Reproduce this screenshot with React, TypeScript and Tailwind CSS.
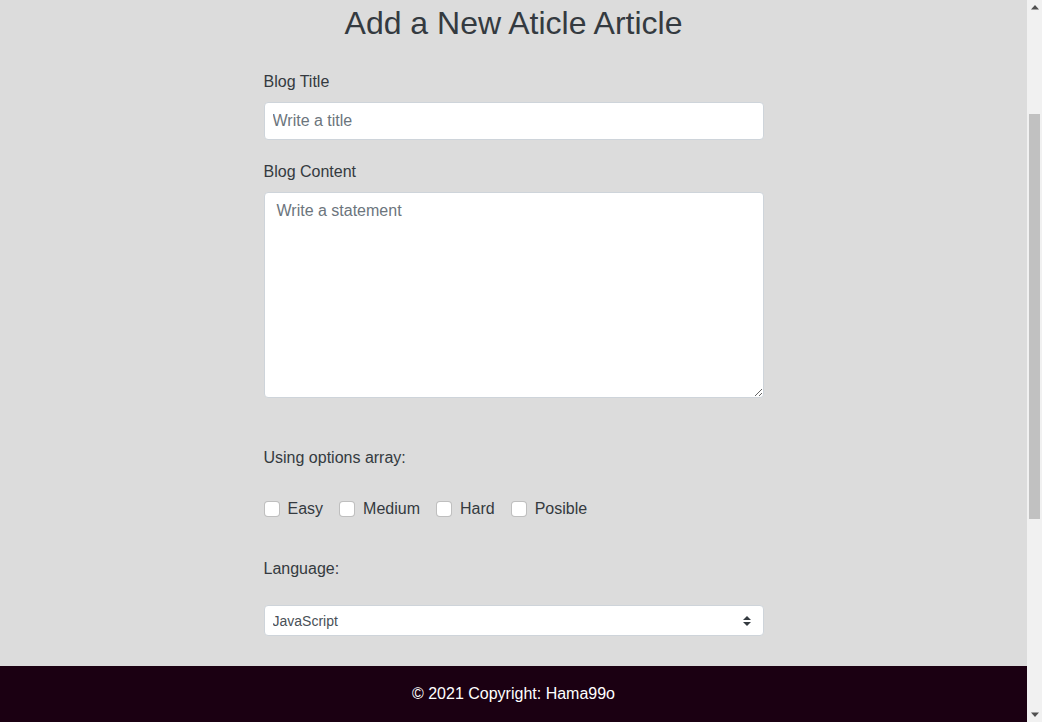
const options = ['Easy', 'Medium', 'Hard', 'Posible']

const selectArrow =
  "url(\"data:image/svg+xml,%3csvg xmlns='http://www.w3.org/2000/svg' width='4' height='5' viewBox='0 0 4 5'%3e%3cpath fill='%23343a40' d='M2 0L0 2h4zm0 5L0 3h4z'/%3e%3c/svg%3e\")"

function ScrollBar() {
  return (
    <div className="flex h-full w-[15px] shrink-0 flex-col items-center bg-[#f1f1f1]">
      <div className="flex h-[15px] w-full items-center justify-center">
        <svg width="8" height="5" viewBox="0 0 8 5">
          <path d="M4 0L8 4.5H0z" fill="#505050" />
        </svg>
      </div>
      <div className="mt-[99px] h-[405px] w-[11px] bg-[#c1c1c1]" />
      <div className="mt-auto flex h-[15px] w-full items-center justify-center">
        <svg width="8" height="5" viewBox="0 0 8 5">
          <path d="M0 0.5H8L4 5z" fill="#505050" />
        </svg>
      </div>
    </div>
  )
}

export default function App() {
  return (
    <div className="flex h-screen overflow-hidden bg-[#dcdcdc] font-['Liberation_Sans',Arial,sans-serif] text-[#343a40]">
      <div className="flex min-w-0 flex-1 flex-col">
        <main className="mx-auto w-[500px] flex-1 pt-[4px]">
          <h2 className="text-center text-[32px] leading-[38px] text-[#343a40]">Add a New Aticle Article</h2>

          <div className="mt-[28px]">
            <label className="mb-2 block text-base leading-6">Blog Title</label>
            <input
              type="text"
              placeholder="Write a title"
              className="block h-[38px] w-full rounded border border-[#ced4da] bg-white px-2 text-base text-[#495057] outline-none placeholder:text-[#6c757d]"
            />
          </div>

          <div className="mt-5">
            <label className="mb-2 block text-base leading-6">Blog Content</label>
            <textarea
              placeholder="Write a statement"
              className="block h-[206px] w-full resize-y rounded border border-[#ced4da] bg-white px-3 py-1.5 text-base leading-6 text-[#495057] outline-none placeholder:text-[#6c757d]"
            />
          </div>

          <p className="mt-[48px] text-base leading-6">Using options array:</p>

          <div className="mt-[27px] flex items-center text-base leading-6">
            {options.map((opt) => (
              <label key={opt} className="mr-4 flex items-center">
                <input
                  type="checkbox"
                  className="mr-2 h-4 w-4 appearance-none rounded border border-black/25 bg-white"
                />
                {opt}
              </label>
            ))}
          </div>

          <p className="mt-9 text-base leading-6">Language:</p>

          <select
            className="mt-[24px] block h-[31px] w-full appearance-none rounded border border-[#ced4da] bg-white bg-[length:8px_10px] bg-[position:right_12px_center] bg-no-repeat pl-2 pr-7 text-sm text-[#495057] outline-none"
            style={{ backgroundImage: selectArrow }}
            defaultValue="JavaScript"
          >
            <option>JavaScript</option>
            <option>Python</option>
            <option>Ruby</option>
            <option>Go</option>
          </select>
        </main>

        <footer className="flex h-14 shrink-0 items-center justify-center bg-[#1b0012] text-base text-white">
          © 2021 Copyright: Hama99o
        </footer>
      </div>

      <ScrollBar />
    </div>
  )
}
